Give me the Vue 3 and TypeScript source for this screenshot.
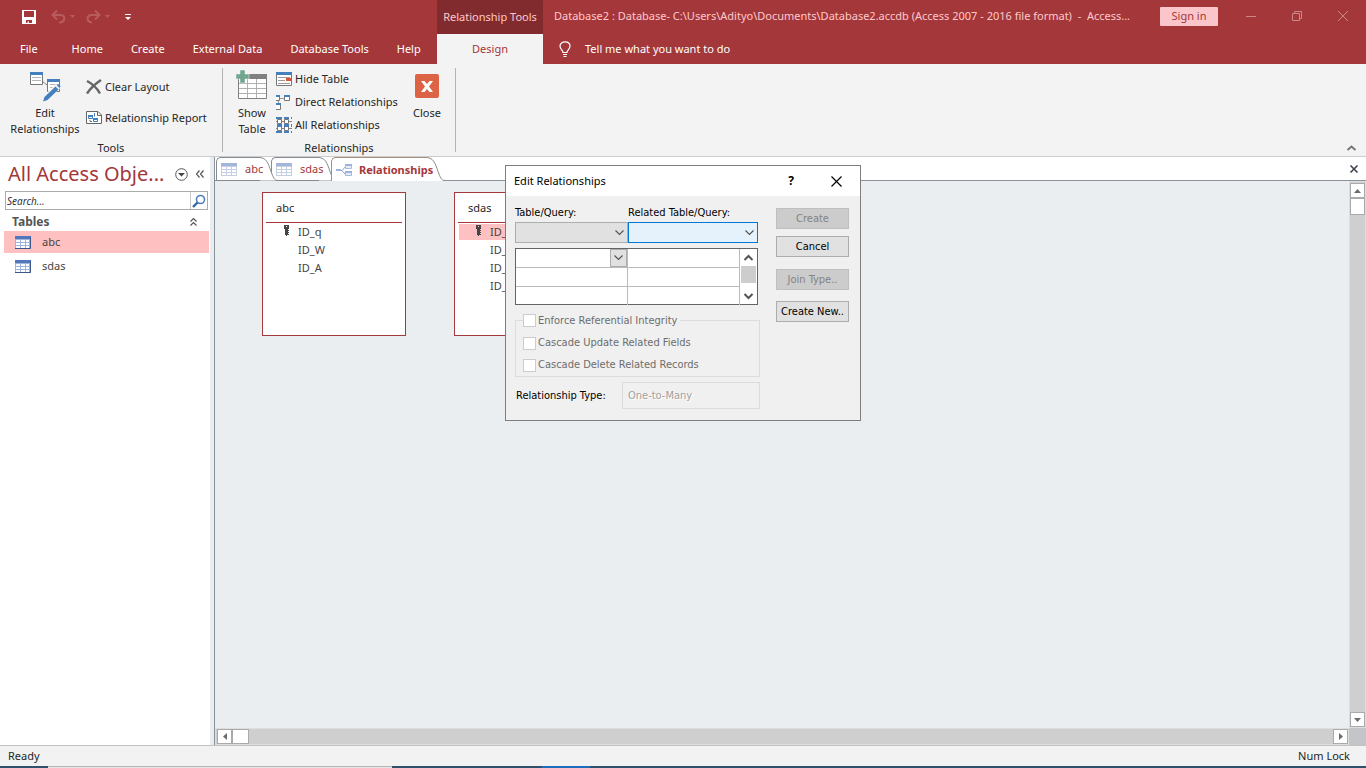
<script setup lang="ts">
import { ref } from 'vue'

interface TableCard { name: string; cls: string; fields: string[]; selected: boolean }

const menu = ['Home', 'Create', 'External Data', 'Database Tools', 'Help']
const objects = ['abc', 'sdas']
const activeObject = ref('abc')
const search = ref('')
const cards: TableCard[] = [
  { name: 'abc', cls: 'card-abc', fields: ['ID_q', 'ID_W', 'ID_A'], selected: false },
  { name: 'sdas', cls: 'card-sdas', fields: ['ID_q', 'ID_W', 'ID_A', 'ID_S'], selected: true },
]
const rows = [0, 1, 2]
</script>

<template>
  <div class="app">
    <header class="head">
      <div class="quick">
        <button class="ic" aria-label="Save">
          <svg width="14" height="14" viewBox="0 0 14 14"><path d="M0 0H14V14H0Z M2 1V7H12V1Z M4 10V13H5.500V11.500H7V13H10V10Z" fill="#fff" fill-rule="evenodd" /></svg>
        </button>
        <button class="ic undo" aria-label="Undo">
          <svg width="24" height="14" viewBox="0 0 24 14"><path d="M6 0.500L1.500 5L6 9.500M2 5H9C15 5 15 12 8 12.500" fill="none" stroke="#b95c5f" stroke-width="2" /><path d="M19 5H24L21.500 8Z" fill="#b95c5f" /></svg>
        </button>
        <button class="ic redo" aria-label="Redo">
          <svg width="24" height="14" viewBox="0 0 24 14"><path d="M9 0.500L13.500 5L9 9.500M13 5H6C0 5 0 12 6 12.500" fill="none" stroke="#b95c5f" stroke-width="2" /><path d="M19 5H24L21.500 8Z" fill="#b95c5f" /></svg>
        </button>
        <button class="ic more" aria-label="Customize toolbar">
          <svg width="6" height="6" viewBox="0 0 6 6"><path d="M0 0H6V1H0Z M0 3H6L3 6Z" fill="#fff" /></svg>
        </button>
      </div>
      <div class="context">Relationship Tools</div>
      <div class="caption">
        <span class="title">Database2 : Database- C:\Users\Adityo\Documents\Database2.accdb (Access 2007 - 2016 file format)&nbsp; -&nbsp; Access...</span>
        <button class="signin">Sign in</button>
        <div class="winctl">
          <button class="ic" aria-label="Minimize"><svg width="10" height="10"><path d="M0 5.500H10" stroke="#c9878a" /></svg></button>
          <button class="ic" aria-label="Restore"><svg width="10" height="10"><path d="M0.500 2.500H7.500V9.500H0.500Z M2.500 2.500V0.500H9.500V7.500H7.500" fill="none" stroke="#c9878a" /></svg></button>
          <button class="ic" aria-label="Close window"><svg width="10" height="10"><path d="M0 0L10 10M10 0L0 10" stroke="#c9878a" /></svg></button>
        </div>
      </div>
      <nav class="menu">
        <button class="file">File</button>
        <button v-for="m in menu" :key="m">{{ m }}</button>
      </nav>
      <button class="design">Design</button>
      <button class="tell">
        <svg width="12" height="16" viewBox="0 0 12 16"><path d="M4 11.500C4 9 1 8.500 1 5C1 -0.500 11 -0.500 11 5C11 8.500 8 9 8 11.500Z M4 13.500H8 M4.500 15.500H7.500" fill="none" stroke="#fff" stroke-width="1.200" /></svg>
        <span>Tell me what you want to do</span>
      </button>
    </header>

    <section class="ribbon">
      <div class="group tools">
        <div class="cmds">
          <button class="big">
            <svg width="32" height="32" viewBox="0 0 32 32">
              <path d="M13 9L18 13" stroke="#888" />
              <path d="M1.500 0.500H13.500V12.500H1.500Z M18.500 7.500H30.500V19.500H18.500Z" fill="#fff" stroke="#777" />
              <path d="M1 0H14V3H1Z M18 7H31V10H18Z" fill="#457fbd" />
              <path d="M3 5.500H12M3 8.500H12M21 12.500H28M21 15.500H26" stroke="#b5b5b5" />
              <path d="M29 14L17 26" stroke="#f2f2f2" stroke-width="6" />
              <path d="M26.500 14.500L29.500 17.500L18.500 28L14 29.500L15.500 25Z" fill="#457fbd" />
              <path d="M28.500 12.500L31 15" stroke="#457fbd" stroke-width="2" />
            </svg>
            <span>Edit<br>Relationships</span>
          </button>
          <div class="stack two">
            <button class="small">
              <svg width="16" height="16" viewBox="0 0 16 16"><path d="M1 2C6 4.500 11 9 14 14.500M15 1C9 5 4 10 1 14.500" fill="none" stroke="#666" stroke-width="2.400" /></svg>
              <span>Clear Layout</span>
            </button>
            <button class="small">
              <svg width="16" height="16" viewBox="0 0 16 16"><path d="M0.500 1.500H12L15.500 5V13.500H0.500Z M11.500 1.500V5.500H15.500" fill="#fff" stroke="#666" /><path d="M2.500 5.500H6.500V8.500H2.500Z M8.500 3V6.500M8.500 8.500H11.500V11.500H7.500V8.500Z" fill="none" stroke="#457fbd" /><path d="M2 5H7V7H2Z M7 8H12V10H7Z" fill="#457fbd" /><path d="M4 10V11.500H6" fill="none" stroke="#777" /></svg>
              <span>Relationship Report</span>
            </button>
          </div>
        </div>
        <div class="glabel">Tools</div>
      </div>
      <div class="group rels">
        <div class="cmds">
          <button class="big show">
            <svg width="32" height="32" viewBox="0 0 32 32">
              <path d="M2.500 4.500H30.500V28.500H2.500Z" fill="#fff" stroke="#808080" />
              <path d="M13 4H31V9H13Z" fill="#808080" />
              <path d="M3 13.500H30M3 18.500H30M3 23.500H30M11.500 9V28M20.500 9V28" stroke="#b0b0b0" />
              <path d="M4 0H9V4H13V9H9V13H4V9H0V4H4Z" fill="#72a590" stroke="#f2f2f2" stroke-width="0.500" />
            </svg>
            <span>Show<br>Table</span>
          </button>
          <div class="stack three">
            <button class="small">
              <svg width="16" height="14" viewBox="0 0 16 14"><path d="M0.500 0.500H15.500V13.500H0.500Z" fill="#fff" stroke="#777" /><path d="M0 0H16V3H0Z" fill="#457fbd" /><path d="M2 5.500H14M2 8.500H9M2 11.500H14" stroke="#999" /><path d="M10 6H16V9H10Z" fill="#dc5034" /></svg>
              <span>Hide Table</span>
            </button>
            <button class="small">
              <svg width="16" height="16" viewBox="0 0 16 16"><path d="M0 1.500H3.500V6.500H0M8.500 1.500H13.500V6.500H8.500ZM0 9.500H4.500V15.500H0" fill="#fff" stroke="#777" /><path d="M4 4.500H8M2.500 7V9" stroke="#999" /><path d="M0 1H4V3H0Z M8 1H14V3H8Z M0 9H5V11H0Z" fill="#457fbd" /></svg>
              <span>Direct Relationships</span>
            </button>
            <button class="small">
              <svg width="16" height="16" viewBox="0 0 16 16"><path d="M0 4.500H16M0 11.500H16M3.500 0V16M10.500 0V16" stroke="#888" /><path d="M1.500 2.500H5.500V6.500H1.500Z M8.500 2.500H12.500V6.500H8.500Z M1.500 9.500H5.500V13.500H1.500Z M8.500 9.500H12.500V13.500H8.500Z" fill="#fff" stroke="#777" /><path d="M0 0H6V2H0Z M8 0H13V2H8Z M15 0H16V2H15Z M1 7H6V10H1Z M8 7H13V10H8Z M15 7H16V10H15Z M0 14H6V16H0Z M8 14H13V16H8Z M15 14H16V16H15Z" fill="#457fbd" /></svg>
              <span>All Relationships</span>
            </button>
          </div>
          <button class="big close">
            <svg width="24" height="24" viewBox="0 0 24 24"><rect width="24" height="24" rx="2" fill="#dc6343" /><path d="M6 7H9.500L12 10L14.500 7H18L14 12.500L18 18H14.500L12 15L9.500 18H6L10 12.500Z" fill="#fff" /></svg>
            <span>Close</span>
          </button>
        </div>
        <div class="glabel">Relationships</div>
      </div>
      <button class="ic collapse" aria-label="Collapse ribbon"><svg width="9" height="6" viewBox="0 0 9 6"><path d="M0.500 5L4.500 1.500L8.500 5" fill="none" stroke="#777" stroke-width="2" /></svg></button>
    </section>

    <div class="work">
      <aside class="navpane">
        <div class="navhead">
          <h1>All Access Obje...</h1>
          <button class="ic" aria-label="Object menu"><svg width="13" height="13" viewBox="0 0 13 13"><circle cx="6.500" cy="6.500" r="5.800" fill="#fff" stroke="#555" /><path d="M3 5H10L6.500 8.500Z" fill="#444" /></svg></button>
          <button class="ic" aria-label="Shutter bar"><svg width="8" height="8" viewBox="0 0 8 8"><path d="M3.500 0.500L0.500 4L3.500 7.500M7.500 0.500L4.500 4L7.500 7.500" fill="none" stroke="#555" stroke-width="1.200" /></svg></button>
        </div>
        <div class="search">
          <input v-model="search" aria-label="Search" placeholder="Search..." />
          <button class="ic" aria-label="Go"><svg width="14" height="14" viewBox="0 0 14 14"><circle cx="8.500" cy="5.500" r="4" fill="#fff" stroke="#4f7fbb" stroke-width="1.600" /><path d="M5.500 8.500L1 13" stroke="#3568a8" stroke-width="2.400" /></svg></button>
        </div>
        <button class="section">
          <span>Tables</span>
          <svg width="7" height="8" viewBox="0 0 7 8"><path d="M0.500 3.500L3.500 0.500L6.500 3.500M0.500 7.500L3.500 4.500L6.500 7.500" fill="none" stroke="#555" stroke-width="1.200" /></svg>
        </button>
        <button v-for="o in objects" :key="o" class="obj" :class="{ on: o === activeObject }" @click="activeObject = o">
          <svg width="16" height="13" viewBox="0 0 16 13"><rect width="16" height="13" fill="#9fb4dc" /><path d="M0 0H16V3H0Z" fill="#5377bb" /><path d="M1 4H5V6H1Z M6 4H10V6H6Z M11 4H14V6H11Z M1 7H5V9H1Z M6 7H10V9H6Z M11 7H14V9H11Z M1 10H5V12H1Z M6 10H10V12H6Z M11 10H14V12H11Z" fill="#fff" /><path d="M0 12.500H15.500V1" fill="none" stroke="#3d5688" /></svg>
          <span>{{ o }}</span>
        </button>
      </aside>
      <div class="splitter"></div>
      <main class="doc">
        <div class="tabs">
          <button v-for="(t, i) in objects" :key="t" class="tab" :class="'t' + i">
            <span class="face">
              <svg width="16" height="13" viewBox="0 0 16 13"><rect width="16" height="13" fill="#c5cfe4" /><path d="M0 0H16V3H0Z" fill="#a3b5d9" /><path d="M1 4H5V6H1Z M6 4H10V6H6Z M11 4H15V6H11Z M1 7H5V9H1Z M6 7H10V9H6Z M11 7H15V9H11Z M1 10H5V12H1Z M6 10H10V12H6Z M11 10H15V12H11Z" fill="#fff" /></svg>
              <span class="name">{{ t }}</span>
            </span>
            <svg class="tail" width="18" height="24" viewBox="0 0 18 24"><path d="M0 0.500C8 1 9 10 12 17C14 22 15 23.500 18 23.500H0Z" fill="#fff" /><path d="M0 0.500C8 1 9 10 12 17C14 22 15 23.500 18 23.500" fill="none" stroke="#858b92" /></svg>
          </button>
          <button class="tab current">
            <span class="face">
              <svg width="16" height="14" viewBox="0 0 16 14"><path d="M0 7.500H6M6 7.500L10 3M6 7.500L9 11" fill="none" stroke="#8fa3c8" /><path d="M9.500 1.500H15.500V5.500H9.500Z M9.500 8.500H15.500V12.500H9.500Z" fill="#e6ecf7" stroke="#a9bbdc" /><path d="M9 1H16V3H9Z M9 8H16V10H9Z M0 6H5V8H0Z" fill="#9db3dc" /></svg>
              <span class="name">Relationships</span>
            </span>
            <svg class="tail" width="18" height="24" viewBox="0 0 18 24"><path d="M0 0.500C8 1 9 10 12 17C14 22 15 23.500 18 23.500V24H0Z" fill="#fff" /><path d="M0 0.500C8 1 9 10 12 17C14 22 15 23.500 18 23.500" fill="none" stroke="#8d8984" /></svg>
          </button>
          <button class="ic closedoc" aria-label="Close tab"><svg width="8" height="8" viewBox="0 0 8 8"><path d="M0.500 0.500L7.500 7.500M7.500 0.500L0.500 7.500" stroke="#3c4250" stroke-width="1.600" /></svg></button>
        </div>
        <div class="view">
          <div class="canvas">
            <section v-for="c in cards" :key="c.name" class="card" :class="c.cls">
              <h2>{{ c.name }}</h2>
              <ul>
                <li v-for="(f, i) in c.fields" :key="f" :class="{ hot: c.selected && i === 0 }">
                  <span class="key"><svg v-if="i === 0" width="5" height="11" viewBox="0 0 5 11"><path d="M0 0H5V4H4V5H5V6H4V7H5V8H4V9H5V10H3V11H2V10H1V4H0Z M2 1V2H3V1Z" fill="#444" fill-rule="evenodd" /></svg></span>
                  <span>{{ f }}</span>
                </li>
              </ul>
            </section>
          </div>
          <div class="vbar">
            <button class="ic" aria-label="Scroll up"><svg width="7" height="4"><path d="M0 4H7L3.500 0Z" fill="#6b6b6b" /></svg></button>
            <span class="thumb"></span>
            <button class="ic end" aria-label="Scroll down"><svg width="7" height="4"><path d="M0 0H7L3.500 4Z" fill="#6b6b6b" /></svg></button>
          </div>
          <div class="hbar">
            <button class="ic" aria-label="Scroll left"><svg width="4" height="7"><path d="M4 0V7L0 3.500Z" fill="#6b6b6b" /></svg></button>
            <span class="thumb"></span>
            <button class="ic end" aria-label="Scroll right"><svg width="4" height="7"><path d="M0 0V7L4 3.500Z" fill="#6b6b6b" /></svg></button>
          </div>
          <div class="corner"></div>
        </div>
      </main>
    </div>

    <footer class="status"><span>Ready</span><span>Num Lock</span></footer>
    <div class="taskbar"><span class="start"></span><span class="find"></span><span class="pins"></span><span class="running"></span><span class="rest"></span></div>

    <div class="dialog" role="dialog" aria-labelledby="dlg-title">
      <div class="dhead">
        <span id="dlg-title">Edit Relationships</span>
        <button class="help" aria-label="Help">?</button>
        <button class="ic" aria-label="Close dialog"><svg width="11" height="11"><path d="M0.500 0.500L10.500 10.500M10.500 0.500L0.500 10.500" stroke="#000" stroke-width="1.200" /></svg></button>
      </div>
      <form class="dbody" @submit.prevent>
        <div class="dleft">
          <div class="pickers">
            <div class="pick">
              <label for="tq">Table/Query:</label>
              <div class="combo"><select id="tq"><option></option></select><svg width="9" height="6"><path d="M0.500 0.500L4.500 4.500L8.500 0.500" /></svg></div>
            </div>
            <div class="pick wide">
              <label for="rtq">Related Table/Query:</label>
              <div class="combo focus"><select id="rtq"><option></option></select><svg width="9" height="6"><path d="M0.500 0.500L4.500 4.500L8.500 0.500" /></svg></div>
            </div>
          </div>
          <div class="gridbox">
            <table>
              <tbody>
                <tr v-for="r in rows" :key="r">
                  <td><div class="cell"><input :aria-label="'Table field ' + (r + 1)" /><button v-if="r === 0" type="button" class="ic drop" aria-label="Choose field"><svg width="9" height="6"><path d="M0.500 0.500L4.500 4.500L8.500 0.500" /></svg></button></div></td>
                  <td><div class="cell"><input :aria-label="'Related field ' + (r + 1)" /></div></td>
                </tr>
              </tbody>
            </table>
            <div class="gbar">
              <button type="button" class="ic" aria-label="Rows up"><svg width="9" height="6"><path d="M0.500 5L4.500 1L8.500 5" /></svg></button>
              <span></span>
              <button type="button" class="ic" aria-label="Rows down"><svg width="9" height="6"><path d="M0.500 1L4.500 5L8.500 1" /></svg></button>
            </div>
          </div>
          <fieldset>
            <legend><label><input type="checkbox" disabled />Enforce Referential Integrity</label></legend>
            <label><input type="checkbox" disabled />Cascade Update Related Fields</label>
            <label><input type="checkbox" disabled />Cascade Delete Related Records</label>
          </fieldset>
          <div class="rtype">
            <label for="rt">Relationship Type:</label>
            <input id="rt" value="One-to-Many" disabled />
          </div>
        </div>
        <div class="dright">
          <button disabled>Create</button>
          <button>Cancel</button>
          <button class="gap" disabled>Join Type..</button>
          <button class="last">Create New..</button>
        </div>
      </form>
    </div>
  </div>
</template>

<style>
html, body { margin: 0; height: 100%; }
</style>

<style scoped>
* { box-sizing: border-box; }
button, input, select { font: inherit; color: inherit; border: 0; padding: 0; margin: 0; background: none; border-radius: 0; min-width: 0; }
svg { display: block; flex: none; overflow: visible; }
.app { height: 100vh; position: relative; display: flex; flex-direction: column; overflow: hidden; background: #fff; color: #262626; font: 11px/16px "Noto Sans", "Open Sans", sans-serif; }
.ic { display: flex; align-items: center; justify-content: center; }

.head { flex: none; display: grid; grid-template-columns: 437px 106px 1fr; grid-template-rows: 34px 30px; background: #a4373a; color: #fff; }
.quick { display: flex; align-items: center; padding: 0 22px; }
.undo { margin-left: 15px; }
.redo { margin-left: 11px; }
.more { margin-left: 15px; }
.context { background: #822b2e; color: #ffc9cc; display: flex; align-items: center; justify-content: center; white-space: nowrap; }
.caption { display: flex; align-items: center; color: #ffc9cc; padding: 0 18px 2px 11px; min-width: 0; }
.title { flex: 1; white-space: nowrap; overflow: hidden; }
.signin { flex: none; width: 58px; height: 19px; border-radius: 1px; background: #fbc6ca; color: #a4373a; }
.winctl { flex: none; display: flex; gap: 36px; margin-left: 28px; }
.menu { display: flex; align-items: stretch; }
.menu button { padding: 0 14px; white-space: nowrap; }
.menu .file { padding: 0 20px; }
.design { background: #f3f3f3; color: #a4373a; }
.tell { display: flex; align-items: center; gap: 14px; padding-left: 16px; }

.ribbon { flex: none; height: 93px; display: flex; background: #f3f3f3; border-bottom: 1px solid #cdcdcd; padding-top: 4px; position: relative; }
.group { display: flex; flex-direction: column; height: 84px; border-right: 1px solid #b4b4b4; }
.tools { width: 223px; }
.rels { width: 233px; }
.cmds { flex: 1; display: flex; min-height: 0; }
.glabel { text-align: center; height: 16px; margin-bottom: -4px; }
.big { width: 80px; margin-left: 5px; display: flex; flex-direction: column; align-items: center; gap: 1px; padding-top: 4px; }
.big.show { width: 42px; margin-left: 8px; padding-top: 2px; gap: 3px; }
.big.close { width: 42px; padding-top: 6px; gap: 7px; margin-left: 3px; }
.stack { display: flex; flex-direction: column; }
.small { display: flex; align-items: center; gap: 3px; white-space: nowrap; height: 23px; }
.two { gap: 8px; padding: 7px 0 0 1px; }
.three { padding: 0 0 0 3px; width: 130px; }
.three .small { padding-bottom: 2px; }
.collapse { position: absolute; right: 10px; bottom: 5px; }

.work { flex: 1; display: flex; min-height: 0; }
.navpane { width: 210px; flex: none; background: #fff; color: #555; }
.navhead { display: flex; align-items: center; height: 34px; padding: 0 6px 0 8px; gap: 8px; }
.navhead h1 { flex: 1; margin: 0; font-size: 20px; line-height: 34px; font-weight: 400; color: #a4373a; white-space: nowrap; }
.search { display: flex; height: 19px; margin: 0 2px 0 5px; border: 1px solid #ababab; }
.search input { flex: 1; padding: 0 1px; font-size: 10px; outline: 0; }
.search input::placeholder { color: #333; font-style: italic; opacity: 1; }
.search button { width: 17px; border-left: 1px solid #c6c6c6; }
.section { width: 100%; height: 21px; display: flex; align-items: center; justify-content: space-between; padding: 2px 13px 0 12px; font-size: 12px; font-weight: 700; color: #555; }
.obj { width: 205px; height: 22px; margin: 0 0 2px 4px; display: flex; align-items: center; gap: 11px; padding: 0 11px 0 11px; color: #444; }
.obj.on { background: #ffc0c2; }
.splitter { width: 5px; flex: none; background: #e9edf0; border-right: 1px solid #8a929c; }

.doc { flex: 1; min-width: 0; display: flex; flex-direction: column; background: #fff; }
.tabs { flex: none; display: flex; height: 24px; border-bottom: 1px solid #8a929c; padding-left: 1px; }
.tab { display: flex; height: 24px; color: #a4373a; position: relative; }
.face { display: flex; align-items: center; gap: 8px; height: 24px; padding-left: 4px; background: #fff; border: 1px solid #858b92; border-right: 0; border-top-left-radius: 5px; white-space: nowrap; }
.name { position: relative; z-index: 1; }
.t0 { z-index: 2; }
.t0 .face { width: 44px; }
.t1 { z-index: 1; margin-left: -7px; }
.t1 .face { width: 48px; }
.current { z-index: 3; margin-left: -6px; font-weight: 700; }
.current .face { width: 96px; border-bottom: 0; border-color: #a5917e; gap: 7px; }
.closedoc { margin-left: auto; width: 8px; margin-right: 8px; }
.view { flex: 1; min-height: 0; display: grid; grid-template-columns: 1fr 17px; grid-template-rows: 1fr 17px; }
.canvas { background: #eaeef1; position: relative; overflow: hidden; }
.card { position: absolute; top: 11px; width: 144px; height: 144px; background: #fff; border: 1px solid #a4373a; padding: 0 3px; }
.card-abc { left: 47px; }
.card-sdas { left: 239px; }
.card h2 { margin: 0; padding: 0 10px; height: 30px; font-size: 11px; line-height: 30px; font-weight: 400; border-bottom: 1px solid #a4373a; }
.card ul { list-style: none; margin: 0; padding: 1px 0; }
.card li { height: 18px; line-height: 16px; display: flex; padding-left: 17px; color: #444; margin-left: 1px; }
.card li.hot { background: linear-gradient(#ffc0c2 16px, #fff 16px); }
.key { width: 14px; padding-top: 1px; }
.vbar, .hbar { background: #cfcfcf; display: flex; border: 1px solid #dedede; }
.vbar { flex-direction: column; padding-top: 1px; }
.hbar { padding-left: 1px; }
.vbar button, .hbar button, .thumb { width: 15px; height: 15px; background: #fff; border: 1px solid #aaa; flex: none; }
.vbar .thumb { height: 17px; }
.hbar .thumb { width: 17px; }
.vbar .end { margin-top: auto; }
.hbar .end { margin-left: auto; }
.corner { background: #c4c5c9; }

.status { flex: none; height: 21px; background: #f2f2f2; border-top: 1px solid #c2c2c2; display: flex; justify-content: space-between; align-items: center; padding: 0 16px 0 8px; }
.taskbar { flex: none; height: 2px; display: flex; background: #31506c; }
.taskbar .start { width: 48px; }
.taskbar .find { width: 344px; background: #e6e6e6; border-top: 1px solid #b5b5b5; }
.taskbar .pins { width: 150px; }
.taskbar .running { width: 48px; background: #1a6ebb; }

.dialog { position: absolute; left: 505px; top: 165px; width: 356px; height: 256px; border: 1px solid #7d7d7d; background: #f0f0f0; color: #000; z-index: 10; display: flex; flex-direction: column; }
.dhead { height: 30px; flex: none; background: #fff; display: flex; align-items: center; padding: 0 18px 0 8px; }
.dhead > span { flex: 1; }
.help { font-size: 12px; font-weight: 700; width: 8px; margin-right: 36px; }
.dbody { flex: 1; display: flex; justify-content: space-between; padding: 9px 11px 0 9px; font: 11px/16px "DejaVu Sans Condensed", "DejaVu Sans", sans-serif; }
.dleft { width: 245px; }
.pickers { display: flex; width: 243px; }
.pick { width: 113px; white-space: nowrap; }
.pick label { display: block; height: 17px; }
.pick.wide { width: 130px; }
.combo { display: flex; align-items: center; height: 21px; background: #e1e1e1; border: 1px solid #adadad; position: relative; }
.combo.focus { background: #e5f1fb; border-color: #0078d7; }
.combo select { width: 100%; height: 19px; appearance: none; outline: 0; }
.combo svg { position: absolute; right: 3px; top: 7px; pointer-events: none; }
.combo path, .drop path { fill: none; stroke: #555; stroke-width: 1.200; }
.gridbox { margin-top: 5px; width: 243px; height: 57px; display: flex; border: 1px solid #646464; background: #fff; }
table { border-collapse: collapse; width: 224px; table-layout: fixed; }
td { padding: 0; border-right: 1px solid #bbb; border-bottom: 1px solid #bbb; }
tr:last-child td { border-bottom: 0; }
.cell { display: flex; height: 18px; }
.cell input { flex: 1; outline: 0; }
.drop { width: 17px; background: #e1e1e1; border: 1px solid #adadad; }
.gbar { flex: 1; display: flex; flex-direction: column; align-items: center; justify-content: space-between; }
.gbar button { width: 17px; height: 17px; }
.gbar span { width: 15px; height: 17px; background: #cdcdcd; margin-bottom: 4px; }
.gbar path { fill: none; stroke: #555; stroke-width: 2; }
fieldset { margin: 8px 0 0; padding: 4px 8px 0 7px; border: 1px solid #dcdcdc; color: #6d6d6d; }
legend { padding: 0 3px 0 0; height: 15px; }
fieldset label { display: flex; align-items: center; gap: 2px; white-space: nowrap; height: 15px; }
fieldset > label { height: 22px; }
fieldset input { appearance: none; width: 13px; height: 13px; background: #fff; border: 1px solid #ccc; }
.rtype { margin-top: 5px; display: flex; align-items: center; justify-content: space-between; padding-left: 1px; }
.rtype input { width: 138px; height: 27px; border: 1px solid #dcdcdc; padding: 0 5px; color: #a0a0a0; text-shadow: 1px 1px #fff; }
.dright { width: 73px; display: flex; flex-direction: column; gap: 7px; padding-top: 3px; }
.dright button { height: 21px; flex: none; background: #e1e1e1; border: 1px solid #adadad; white-space: nowrap; }
.dright button:disabled { background: #ccc; border-color: #bfbfbf; color: #838383; }
.dright .gap { margin-top: 5px; }
.dright .last { margin-top: 4px; }
</style>
